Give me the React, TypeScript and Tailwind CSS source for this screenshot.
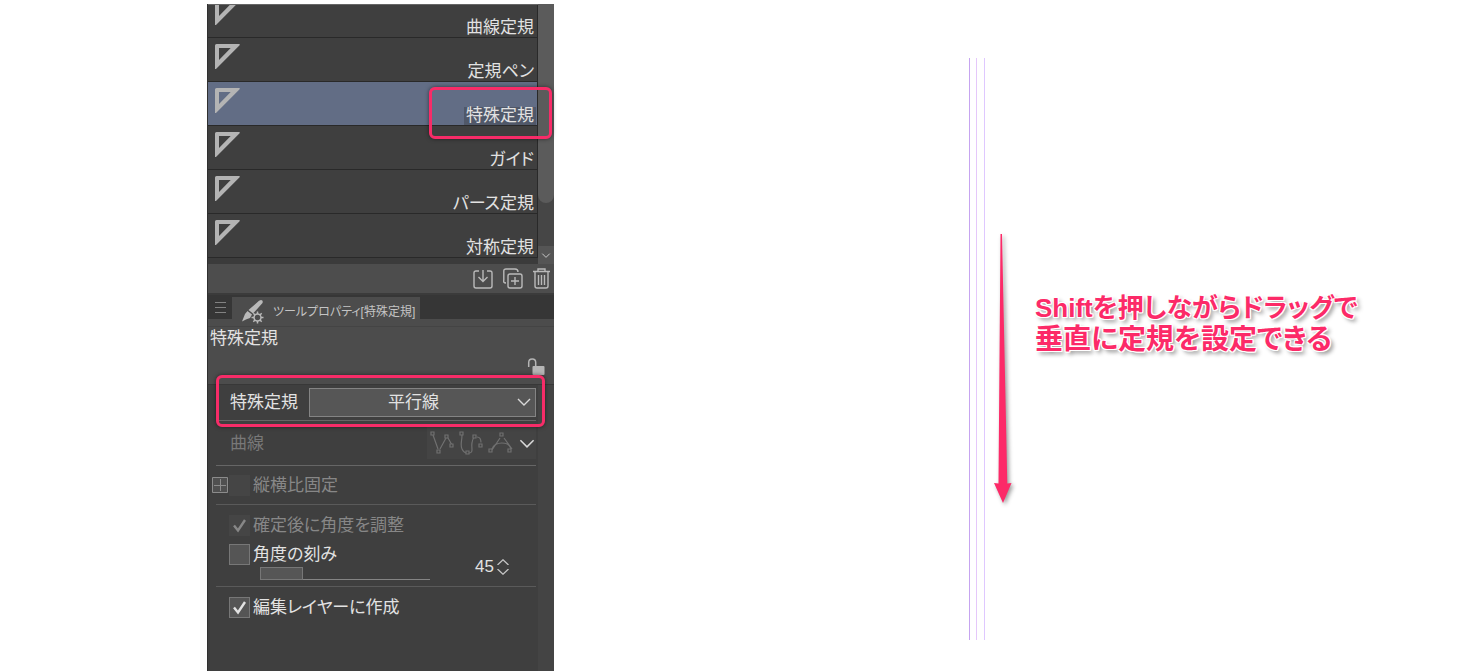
import { useState } from "react";
import type { ReactNode } from "react";

const subTools = ["曲線定規", "定規ペン", "特殊定規", "ガイド", "パース定規", "対称定規"];

const RulerIcon = () => (
    <svg className="w-[25px] h-[25px] flex-shrink-0 mt-[6px]" viewBox="0 0 25 25" fill="#b4b4b4" fillRule="evenodd">
        <path d="M1.5 0H24.5Q25 .6 24.6 1.2L1 25H0V1.5Q0 0 1.5 0ZM4 4V16L15.700 4Z" />
    </svg>
);

const ChevronDown = ({ className }: { className: string }) => (
    <svg className={className} viewBox="0 0 16 10" fill="none" stroke="#d8d8d8" strokeWidth={1.4}>
        <path d="M2 2l6 6 6-6" />
    </svg>
);

type CheckRowProps = {
    label: string;
    checked?: boolean;
    disabled?: boolean;
    onChange?: (value: boolean) => void;
    before?: ReactNode;
};

const CheckRow = ({ label, checked = false, disabled = false, onChange, before }: CheckRowProps) => (
    <div className="flex items-center">
        {before}
        <label className={`flex items-center gap-[3px] ${disabled ? "text-[#878787]" : "text-[#e2e2e2]"}`}>
            <span className="relative flex">
                <input
                    type="checkbox"
                    checked={checked}
                    disabled={disabled}
                    onChange={(e) => onChange?.(e.target.checked)}
                    className="appearance-none w-[21px] h-[21px] border border-[#777777] bg-[#555555] disabled:border-[#454545] disabled:bg-[#454545]"
                />
                {checked && (
                    <svg className="absolute inset-0 w-[21px] h-[21px] pointer-events-none" viewBox="0 0 21 21" fill="none" stroke="currentColor" strokeWidth={2.4}>
                        <path d="M5 10.5l4 5L16 5" />
                    </svg>
                )}
            </span>
            <span className="pt-[2px]">{label}</span>
        </label>
    </div>
);

const SubToolList = () => {
    const [active, setActive] = useState("特殊定規");

    return (
        <div className="relative">
            <div className="flex items-start bg-[#3b3b3b]">
                <div className="flex-1 min-w-0 h-[254px] flex flex-col justify-end overflow-hidden border-t border-[#666666]">
                    {subTools.map((tool) => (
                        <button
                            key={tool}
                            onClick={() => setActive(tool)}
                            className={`h-11 flex-shrink-0 flex items-start justify-between pl-[7px] pr-px border-b border-r border-[#292929] ${active === tool ? "bg-[#626d85]" : "bg-[#3f3f3f]"}`}
                        >
                            <RulerIcon />
                            <span className={`self-end px-[2px] leading-[18px] ${active === tool ? "bg-[#505869]" : ""}`}>{tool}</span>
                        </button>
                    ))}
                </div>

                {/* Scrollbar */}
                <div className="w-4 h-[260px] flex flex-col justify-between bg-[#464646]">
                    <div className="h-[199px] rounded-b-full bg-[#5b5b5b]" />
                    <button aria-label="下へ" className="h-[18px] flex items-center justify-center bg-[#555555]">
                        <ChevronDown className="w-[10px] h-[7px]" />
                    </button>
                </div>
            </div>

            {/* Callout around the selected sub tool */}
            <div className="absolute right-[2px] top-[83px] w-[123px] h-[52px] rounded-md border-3 border-[#f72c68] shadow-[0_0_4px_rgba(0,0,0,0.5)] pointer-events-none" />
        </div>
    );
};

const SubToolActions = () => (
    <div className="h-[29px] flex items-center justify-end gap-[10px] pr-1 bg-[#4d4d4d] text-[#bababa]">
        <button aria-label="追加">
            <svg className="w-5 h-[22px]" viewBox="0 0 20 22" fill="none" stroke="currentColor" strokeWidth={1.4}>
                <path d="M6 3H3Q1 3 1 5V18Q1 20 3 20H17Q19 20 19 18V5Q19 3 17 3H14M10 2V13M5.500 9l4.500 4.500L14.500 9" />
            </svg>
        </button>
        <button aria-label="複製">
            <svg className="w-5 h-[22px]" viewBox="0 0 20 22" fill="none" stroke="currentColor" strokeWidth={1.4}>
                <rect x="5" y="6" width="14" height="14" rx="2" />
                <path d="M3 15Q0 15 0.800 12V3Q.8 1 3 1H12Q15 1 15 4M12 9v8M8 13h8" />
            </svg>
        </button>
        <button aria-label="削除">
            <svg className="w-[17px] h-[22px]" viewBox="0 0 17 22" fill="none" stroke="currentColor" strokeWidth={1.4}>
                <path d="M0 3.500H17M5 3V1H12V3M2 4V18Q2 20 4 20H13Q15 20 15 18V4M5.500 7V17M8.500 7V17M11.500 7V17" />
            </svg>
        </button>
    </div>
);

const PropertyHeader = () => (
    <>
        <div className="h-[26px] flex items-start border-t-2 border-[#3b3b3b] bg-[#363636]">
            <button aria-label="メニュー" className="w-6 h-6 flex items-center justify-center">
                <svg className="w-[11px] h-[11px]" viewBox="0 0 11 11" stroke="#828282">
                    <path d="M0 .5H11M0 5.500H11M0 10.500H11" />
                </svg>
            </button>
            <button className="relative z-10 mt-[2px] h-[29px] w-[188px] flex items-center gap-2 pl-[10px] bg-[#4c4c4c] text-xs text-[#c4c4c4] whitespace-nowrap">
                <svg className="w-[23px] h-6 flex-shrink-0" viewBox="0 0 23 24" fill="#b9b9b9">
                    <path d="M19 0Q21.500 .5 20.500 3L11 13.500 6.500 10 17 .8ZM5.500 11l4.500 3.500-2 3.500Q5 18.500 0 21.500L3 14Z" />
                    <g fill="none" stroke="#b9b9b9" strokeWidth={1.5}>
                        <circle cx="15.500" cy="17.500" r="3.500" />
                        <path d="M15.500 11.500v2.500M15.500 21v2.500M9.500 17.500H12M19 17.500h2.500M11.300 13.300l1.700 1.700M18 20l1.700 1.700M19.700 13.300L18 15M13 20l-1.700 1.700" />
                    </g>
                </svg>
                ツールプロパティ[特殊定規]
            </button>
        </div>
        <div className="bg-[#4c4c4c] pt-[7px] border-b border-[#383838]">
            <div className="h-[58px] flex items-start justify-between border-t border-[#444444] pl-[2px] pr-[9px]">
                <h2 className="leading-6">特殊定規</h2>
                <button aria-label="ロック" className="self-end mb-[9px]">
                    <svg className="block w-[18px] h-[17px]" viewBox="0 0 18 17">
                        <path d="M1.700 9V4.500Q1.700 1 5.200 1T8.700 4.500V8" fill="none" stroke="#b5b5b5" strokeWidth={1.5} />
                        <rect x="5.500" y="8" width="12" height="9" rx="1" fill="#b5b5b5" />
                    </svg>
                </button>
            </div>
        </div>
    </>
);

const CurveTypes = () => (
    <button disabled aria-label="曲線の種類" className="flex items-center h-8 pl-[2px] gap-[5px] bg-[#444444]">
        <svg className="w-[84px] h-[24px]" viewBox="0 0 82 24" fill="none" stroke="#707070" strokeWidth={1.2}>
            <path d="M3 4L8 18M10 18L16 7M18 7l4 7M32 4C32 10 30 14 32 18Q34 22 37 22M39 22C44 22 41 16 42 12Q43 6 45 6M47 6Q51 6 51 11.500M62 19L70 7M74 7l8 11M62 18C65 10 79 10 81 18" />
            <g fill="#444444">
                <path d="M1 1h3v3H1zM7 19h3v3H7zM15 4h3v3h-3zM20 13h3v3h-3zM30 1h3v3h-3zM36 20h3v3h-3zM43 4h3v3h-3zM49 13h3v3h-3zM59 18h3v3h-3zM70 2h3v3h-3zM78 18h3v3h-3z" />
            </g>
        </svg>
        <ChevronDown className="w-[18px] h-[11px]" />
    </button>
);

const ToolProperties = () => {
    const [step, setStep] = useState(45);
    const [useStep, setUseStep] = useState(false);
    const [onLayer, setOnLayer] = useState(true);

    return (
        <div className="relative flex flex-1 bg-[#3f3f3f]">
            <div className="flex-1 min-w-0 pl-2 pr-[2px]">
                <div className="h-9 flex items-center border-b border-[#666666]">
                    <label htmlFor="ruler-type" className="w-[93px] pl-[14px]">特殊定規</label>
                    <div className="relative flex-1 flex">
                        <select
                            id="ruler-type"
                            defaultValue="平行線"
                            className="appearance-none w-full h-[29px] pr-[18px] border border-[#848484] bg-[#565656] [text-align-last:center]"
                        >
                            <option>平行線</option>
                            <option>平行曲線</option>
                            <option>放射線</option>
                        </select>
                        <ChevronDown className="absolute right-1 top-[9px] w-4 h-[10px] pointer-events-none" />
                    </div>
                </div>

                <div className="h-[45px] flex items-center justify-between border-b border-[#666666] pl-[14px] text-[#787878]">
                    <span className="pt-[2px]">曲線</span>
                    <CurveTypes />
                </div>

                <div className="h-[39px] flex items-center border-b border-[#5a5a5a]">
                    <CheckRow
                        label="縦横比固定"
                        disabled
                        before={
                            <button aria-label="展開" className="-ml-1 mr-px">
                                <svg className="w-4 h-4" viewBox="0 0 16 16" fill="#505050" stroke="#8c8c8c">
                                    <path d="M.5 .5H15.500V15.500H.5ZM8.500 2V14M2 8.500H14" />
                                </svg>
                            </button>
                        }
                    />
                </div>

                <div className="h-[82px] pl-[13px] pt-[7px] border-b border-[#5a5a5a]">
                    <CheckRow label="確定後に角度を調整" checked disabled />
                    <div className="flex items-center">
                        <div className="w-[201px] pt-[3px]">
                            <CheckRow label="角度の刻み" checked={useStep} onChange={setUseStep} />
                            <div className="relative ml-[31px] h-[13px] border-b border-[#848484]">
                                <div className="h-[13px] border border-[#777777] bg-[#565656]" style={{ width: `${(step / 180) * 100}%` }} />
                                <input
                                    type="range"
                                    aria-label="角度の刻み"
                                    min={1}
                                    max={180}
                                    value={step}
                                    onChange={(e) => setStep(Number(e.target.value))}
                                    className="absolute inset-0 w-full opacity-0"
                                />
                            </div>
                        </div>
                        <input
                            aria-label="角度"
                            value={step}
                            onChange={(e) => setStep(Number(e.target.value) || 0)}
                            className="ml-7 w-9 h-5 mt-4 text-right bg-transparent outline-none"
                        />
                        <div className="flex flex-col gap-1 ml-[3px] mt-4">
                            <button aria-label="増やす" onClick={() => setStep(step + 1)}>
                                <svg className="block w-3 h-[6px]" viewBox="0 0 12 6" fill="none" stroke="#c4c4c4" strokeWidth={1.3}>
                                    <path d="M.5 6L6 .8 11.500 6" />
                                </svg>
                            </button>
                            <button aria-label="減らす" onClick={() => setStep(step - 1)}>
                                <svg className="block w-3 h-[6px]" viewBox="0 0 12 6" fill="none" stroke="#c4c4c4" strokeWidth={1.3}>
                                    <path d="M.5 0L6 5.200 11.500 0" />
                                </svg>
                            </button>
                        </div>
                    </div>
                </div>

                <div className="pl-[13px] pt-[7px]">
                    <CheckRow label="編集レイヤーに作成" checked={onLayer} onChange={setOnLayer} />
                </div>
            </div>
            <div className="w-4 bg-[#444444]" />

            {/* Callout around the ruler type */}
            <div className="absolute left-2 right-[9px] -top-[10px] h-[52px] rounded-md border-3 border-[#f72c68] shadow-[0_0_4px_rgba(0,0,0,0.5)] pointer-events-none" />
        </div>
    );
};

const Canvas = () => (
    <section className="flex-1 flex items-start pl-[415px] pt-[58px]">
        {/* Parallel ruler guides */}
        <div className="w-4 h-[582px] flex-shrink-0 flex gap-[6px]">
            <div className="w-px bg-[#c6a4f0]" />
            <div className="w-px bg-[#e5c8fa]" />
            <div className="w-px ml-px bg-[#dfc8ff]" />
        </div>

        <svg className="w-[22px] h-[270px] flex-shrink-0 ml-2 mt-[176px] overflow-visible drop-shadow-[2px_2px_2px_rgba(0,0,0,0.4)]" viewBox="0 0 22 270" fill="#fc2a68">
            <path d="M7.500 0H9L14.300 249.500 18.500 249 10 269 1 249 5.500 249.500Z" />
        </svg>

        <p className="ml-5 mt-[234px] leading-8 font-bold text-[#fc2a68] whitespace-nowrap [text-shadow:1px_0_#fff,-1px_0_#fff,0_1px_#fff,0_-1px_#fff,1px_1px_#fff,-1px_-1px_#fff,1px_-1px_#fff,-1px_1px_#fff,3px_3px_4px_rgba(0,0,0,0.45)]">
            <span className="block text-[26px] leading-8">Shiftを押しながらドラッグで</span>
            <span className="block text-[28px] leading-8">垂直に定規を設定できる</span>
        </p>
    </section>
);

export default function App() {
    return (
        <main className="min-h-screen flex bg-white font-['Liberation_Sans','Noto_Sans_CJK_JP',sans-serif] [font-feature-settings:'palt']">
            <aside className="w-[347px] flex-shrink-0 ml-[207px] mt-1 flex flex-col border-l border-[#303030] bg-[#3f3f3f] text-[17px] leading-6 text-[#e2e2e2]">
                <SubToolList />
                <SubToolActions />
                <PropertyHeader />
                <ToolProperties />
            </aside>
            <Canvas />
        </main>
    );
}
